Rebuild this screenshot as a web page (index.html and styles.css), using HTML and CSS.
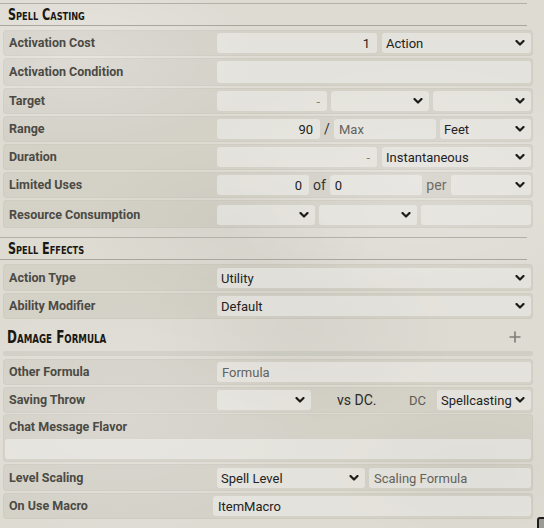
FILE: index.html
```html
<!DOCTYPE html>
<html>
<head>
<meta charset="utf-8">
<link rel="stylesheet" href="styles.css">
</head>
<body>
<div class="sheet">
  <h3 class="form-header first"><span class="hd">Spell Casting</span></h3>

  <div class="form-group">
    <label>Activation Cost</label>
    <div class="fields wide-gap">
      <input class="field num w160" type="text" value="1">
      <span class="select grow"><select><option>Action</option></select><svg class="chev" viewBox="0 0 9 6"><polyline points="1,1 4.5,4.5 8,1"/></svg></span>
    </div>
  </div>

  <div class="form-group">
    <label>Activation Condition</label>
    <div class="fields">
      <input class="field grow h22" type="text" value="">
    </div>
  </div>

  <div class="form-group">
    <label>Target</label>
    <div class="fields">
      <input class="field num w110" type="text" placeholder="-">
      <span class="select grow"><select><option></option></select><svg class="chev" viewBox="0 0 9 6"><polyline points="1,1 4.5,4.5 8,1"/></svg></span>
      <span class="select grow"><select><option></option></select><svg class="chev" viewBox="0 0 9 6"><polyline points="1,1 4.5,4.5 8,1"/></svg></span>
    </div>
  </div>

  <div class="form-group">
    <label>Range</label>
    <div class="fields">
      <input class="field num w103" type="text" value="90">
      <span class="sep w6">/</span>
      <input class="field w102" type="text" placeholder="Max">
      <span class="select grow"><select><option>Feet</option></select><svg class="chev" viewBox="0 0 9 6"><polyline points="1,1 4.5,4.5 8,1"/></svg></span>
    </div>
  </div>

  <div class="form-group">
    <label>Duration</label>
    <div class="fields wide-gap">
      <input class="field num w160" type="text" placeholder="-">
      <span class="select grow"><select><option>Instantaneous</option></select><svg class="chev" viewBox="0 0 9 6"><polyline points="1,1 4.5,4.5 8,1"/></svg></span>
    </div>
  </div>

  <div class="form-group">
    <label>Limited Uses</label>
    <div class="fields">
      <input class="field num w92" type="text" value="0">
      <span class="sep w12">of</span>
      <input class="field w92" type="text" value="0">
      <span class="sep w21 muted">per</span>
      <span class="select grow"><select><option></option></select><svg class="chev" viewBox="0 0 9 6"><polyline points="1,1 4.5,4.5 8,1"/></svg></span>
    </div>
  </div>

  <div class="form-group res">
    <label>Resource Consumption</label>
    <div class="fields">
      <span class="select w98"><select><option></option></select><svg class="chev" viewBox="0 0 9 6"><polyline points="1,1 4.5,4.5 8,1"/></svg></span>
      <span class="select w98"><select><option></option></select><svg class="chev" viewBox="0 0 9 6"><polyline points="1,1 4.5,4.5 8,1"/></svg></span>
      <input class="field grow" type="text" value="">
    </div>
  </div>

  <h3 class="form-header second"><span class="hd">Spell Effects</span></h3>

  <div class="form-group pt4">
    <label>Action Type</label>
    <div class="fields">
      <span class="select grow"><select><option>Utility</option></select><svg class="chev" viewBox="0 0 9 6"><polyline points="1,1 4.5,4.5 8,1"/></svg></span>
    </div>
  </div>

  <div class="form-group">
    <label>Ability Modifier</label>
    <div class="fields">
      <span class="select grow"><select><option>Default</option></select><svg class="chev" viewBox="0 0 9 6"><polyline points="1,1 4.5,4.5 8,1"/></svg></span>
    </div>
  </div>

  <h4 class="damage-header">
    <span class="hd">Damage Formula</span>
    <svg class="plus" viewBox="0 0 12 12"><path d="M6 0.5V11.5M0.5 6H11.5"/></svg>
  </h4>
  <ol class="damage-parts"></ol>

  <div class="form-group">
    <label>Other Formula</label>
    <div class="fields">
      <input class="field grow" type="text" placeholder="Formula">
    </div>
  </div>

  <div class="form-group save">
    <label>Saving Throw</label>
    <div class="fields">
      <span class="select w94"><select><option></option></select><svg class="chev" viewBox="0 0 9 6"><polyline points="1,1 4.5,4.5 8,1"/></svg></span>
      <span class="vs">vs DC.</span>
      <span class="dc">DC</span>
      <span class="select grow"><select><option>Spellcasting</option></select><svg class="chev" viewBox="0 0 9 6"><polyline points="1,1 4.5,4.5 8,1"/></svg></span>
    </div>
  </div>

  <div class="form-group stacked">
    <label>Chat Message Flavor</label>
    <input class="field full" type="text" value="">
  </div>

  <div class="form-group pt4">
    <label>Level Scaling</label>
    <div class="fields">
      <span class="select w148"><select><option>Spell Level</option></select><svg class="chev" viewBox="0 0 9 6"><polyline points="1,1 4.5,4.5 8,1"/></svg></span>
      <input class="field grow" type="text" placeholder="Scaling Formula">
    </div>
  </div>

  <div class="form-group macro">
    <label>On Use Macro</label>
    <div class="fields">
      <input class="field grow" type="text" value="ItemMacro">
    </div>
  </div>
</div>
<div class="resize-handle"></div>
</body>
</html>
```

FILE: styles.css
```css
html, body {
  margin: 0;
  padding: 0;
}

body {
  width: 544px;
  height: 528px;
  overflow: hidden;
  position: relative;
  font-family: Roboto, "Noto Sans", sans-serif;
  font-size: 13px;
  color: #191813;
  background-color: #dddbd2;
  background-image:
    radial-gradient(ellipse 180px 90px at 80px 60px, rgba(255,255,255,0.28), transparent),
    radial-gradient(ellipse 220px 120px at 420px 180px, rgba(255,255,255,0.22), transparent),
    radial-gradient(ellipse 160px 100px at 300px 330px, rgba(0,0,0,0.035), transparent),
    radial-gradient(ellipse 200px 120px at 120px 420px, rgba(255,255,255,0.2), transparent),
    radial-gradient(ellipse 140px 80px at 470px 470px, rgba(0,0,0,0.03), transparent),
    radial-gradient(ellipse 150px 90px at 230px 230px, rgba(0,0,0,0.03), transparent);
}

.sheet {
  display: flex;
  flex-direction: column;
}

.hd {
  display: inline-block;
  transform-origin: left center;
  white-space: nowrap;
}

.form-header {
  margin: 0 17px 0 0;
  padding: 0 0 0 8px;
  height: 21px;
  border-top: 1px solid #b3b1a7;
  border-bottom: 1px solid #a9a79d;
  font-family: "DejaVu Sans Condensed", "DejaVu Sans", sans-serif;
  font-stretch: condensed;
  font-weight: bold;
  font-variant: small-caps;
  font-size: 15px;
  line-height: 23px;
  color: #191813;
}

.form-header .hd {
  transform: scaleX(0.83);
}

.form-header.first {
  margin-top: 3px;
  margin-bottom: 4px;
}

.form-header.second {
  margin-top: 7px;
  margin-bottom: 4px;
}

.form-group {
  display: flex;
  align-items: center;
  margin: 0 11px 2px 3px;
  padding: 3px 2px 3px 6px;
  background: rgba(60, 55, 30, 0.06);
  border-radius: 4px;
  box-shadow: inset 0 0 0 1px rgba(60, 55, 30, 0.03);
}

.form-group.res {
  padding-top: 5px;
}

.form-group.pt4 {
  padding-top: 4px;
}

.form-group.save {
  margin-bottom: 1px;
}

.form-group label {
  flex: 0 0 208px;
  padding-bottom: 2px;
  font-weight: bold;
  font-size: 12.5px;
  color: #4b4a44;
}

.form-group.macro label {
  flex-basis: 204px;
}

.form-group.stacked {
  flex-direction: column;
  align-items: stretch;
  padding: 3px 2px 3px 2px;
}

.form-group.stacked label {
  flex: 0 0 auto;
  height: 20px;
  line-height: 19px;
  padding: 0 0 0 4px;
}

.fields {
  flex: 1;
  display: flex;
  align-items: center;
  gap: 4px;
  min-width: 0;
}

.fields.wide-gap {
  gap: 5px;
}

.field,
.select select {
  box-sizing: border-box;
  height: 20px;
  border: none;
  outline: none;
  border-radius: 3px;
  background: rgba(255, 255, 255, 0.38);
  font-family: Roboto, "Noto Sans", sans-serif;
  font-size: 13px;
  color: #222;
  padding: 0 5px;
  margin: 0;
}

.field::placeholder {
  color: #64635c;
}

.field.num {
  text-align: right;
  padding-right: 7px;
}

.field.num::placeholder {
  color: #7d7c75;
}

.field.h22 {
  height: 22px;
}

.field.full {
  width: 100%;
  margin-top: 2px;
}

.grow { flex: 1 1 0; min-width: 0; }
.w160 { flex: 0 0 160px; width: 160px; }
.w110 { flex: 0 0 110px; width: 110px; }
.w103 { flex: 0 0 103px; width: 103px; }
.w102 { flex: 0 0 102px; width: 102px; }
.w98 { flex: 0 0 98px; width: 98px; }
.w94 { flex: 0 0 94px; width: 94px; }
.w92 { flex: 0 0 92px; width: 92px; }
.w148 { flex: 0 0 148px; width: 148px; }

.select {
  position: relative;
  display: block;
  height: 20px;
}

.select select {
  -webkit-appearance: none;
  appearance: none;
  width: 100%;
  padding-left: 4px;
  color: #222;
}

.chev {
  position: absolute;
  right: 6px;
  top: 7px;
  width: 10px;
  height: 6px;
  fill: none;
  stroke: #1b1b18;
  stroke-width: 2.2;
  stroke-linecap: round;
  stroke-linejoin: round;
  pointer-events: none;
}

.sep {
  text-align: center;
  font-size: 14px;
  color: #333;
}

.sep.w6 { flex: 0 0 6px; }
.sep.w12 { flex: 0 0 12px; }
.sep.w21 { flex: 0 0 21px; }

.muted {
  color: #6e6d66;
}

.vs {
  flex: 0 0 90px;
  box-sizing: border-box;
  padding-left: 22px;
  font-size: 14px;
  color: #2a2a26;
}

.dc {
  flex: 0 0 24px;
  text-align: left;
  font-size: 13px;
  color: #5d5c55;
}

.damage-header {
  display: flex;
  align-items: center;
  justify-content: space-between;
  margin: 0 11px 0 3px;
  padding: 3px 12px 0 4px;
  box-sizing: border-box;
  height: 28px;
  font-family: "DejaVu Sans Condensed", "DejaVu Sans", sans-serif;
  font-stretch: condensed;
  font-weight: bold;
  font-variant: small-caps;
  font-size: 18px;
  color: #191813;
}

.damage-header .hd {
  transform: scaleX(0.74);
}

.plus {
  width: 12px;
  height: 12px;
  fill: none;
  stroke: #7d7c75;
  stroke-width: 1.6;
}

.damage-parts {
  list-style: none;
  margin: 2px 11px 3px 3px;
  padding: 0;
  height: 5px;
  border-radius: 3px;
  background: rgba(60, 55, 30, 0.07);
}

.resize-handle {
  position: absolute;
  left: 537px;
  top: 517px;
  width: 12px;
  height: 12px;
  border: 2px solid #1c1c1a;
  border-radius: 3px;
  background: #9c9b95;
}
```
